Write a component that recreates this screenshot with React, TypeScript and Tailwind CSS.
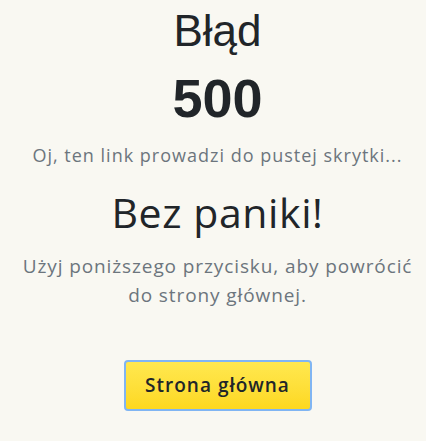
export default function App() {
  return (
    <div className="min-h-[441px] w-full bg-[#f9f8f2] text-center">
      <div className="flex flex-col items-center pl-[25px] pr-[16px] pt-[5px]">
        <h1 className="font-['Liberation_Sans',Arial,sans-serif] text-[44px] leading-[52px] text-[#212529]">
          Błąd
        </h1>
        <h2 className="mt-[10px] font-['Liberation_Sans',Arial,sans-serif] text-[54px] font-bold leading-[62px] text-[#212529]">
          500
        </h2>
        <p className="mt-[13px] whitespace-nowrap font-['Open_Sans',sans-serif] text-[18px] leading-[26px] tracking-[1px] text-[#6c757d]">
          Oj, ten link prowadzi do pustej skrytki...
        </p>
        <h3 className="mt-[18px] font-['Open_Sans',sans-serif] text-[41px] leading-[52px] tracking-[0.6px] text-[#212529]">
          Bez paniki!
        </h3>
        <p className="mt-[14px] whitespace-nowrap font-['Open_Sans',sans-serif] text-[19px] leading-[29px] tracking-[0.9px] text-[#6c757d]">
          Użyj poniższego przycisku, aby powrócić
          <br />
          do strony głównej.
        </p>
        <button
          type="button"
          className="mt-[50px] h-[51px] w-[188px] rounded-[4px] border-2 border-[#80b5f3] bg-gradient-to-b from-[#ffe84e] to-[#fdd81e] font-['Open_Sans',sans-serif] text-[19px] font-semibold tracking-[1px] text-[#212529]"
        >
          Strona główna
        </button>
      </div>
    </div>
  );
}
